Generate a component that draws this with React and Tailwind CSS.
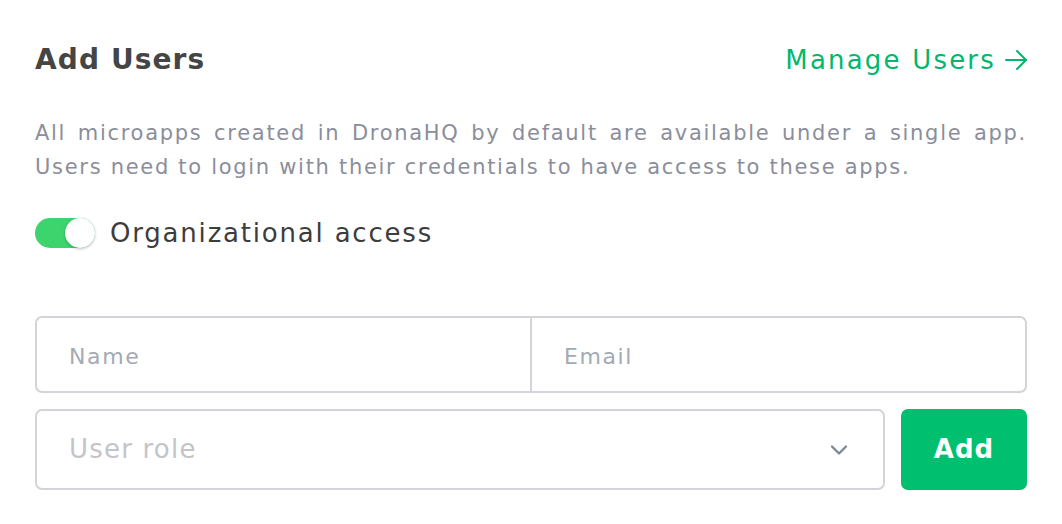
import React, { useState } from 'react';
import { ChevronDown } from 'lucide-react';

const FONT = { fontFamily: '"DejaVu Sans", "Noto Sans", sans-serif' };

const App = () => {
  const [orgAccess, setOrgAccess] = useState(true);

  return (
    <div className="w-[1062px] h-[524px] bg-white px-[35px] pt-[40px]" style={FONT}>
      <div className="flex items-center justify-between h-[40px]">
        <h1 className="text-[28px] font-bold text-[#454545] tracking-[1.1px]">Add Users</h1>
        <a href="#" className="flex items-center gap-[8px] text-[26px] text-[#00b86b] tracking-[2.2px] mr-[-1px]">
          <span>Manage Users</span>
          <svg width="24" height="24" viewBox="0 0 24 24" fill="none" stroke="currentColor" strokeWidth="2" strokeLinecap="round" strokeLinejoin="round">
            <path d="M2 12h20" />
            <path d="M13 3l9 9-9 9" />
          </svg>
        </a>
      </div>

      <div className="mt-[36px] text-[21px] leading-[34px] text-[#8b8e9a] tracking-[1.7px]">
        <p className="text-justify [text-align-last:justify]">All microapps created in DronaHQ by default are available under a single app.</p>
        <p>Users need to login with their credentials to have access to these apps.</p>
      </div>

      <div className="mt-[32px] flex items-center gap-[15px] h-[34px]">
        <button
          onClick={() => setOrgAccess(!orgAccess)}
          className={`relative w-[60px] h-[30px] rounded-full transition-colors ${orgAccess ? 'bg-[#3dd46d]' : 'bg-gray-300'}`}
        >
          <span
            className={`absolute top-0 w-[30px] h-[30px] rounded-full bg-white shadow-[0_1px_3px_rgba(0,0,0,0.25)] ${orgAccess ? 'right-0' : 'left-0'}`}
          />
        </button>
        <span className="text-[26px] text-[#3d3d3d] tracking-[1.8px]">Organizational access</span>
      </div>

      <div className="mt-[66px] flex h-[77px] border-2 border-[#d3d3da] rounded-[7px]">
        <input
          type="text"
          placeholder="Name"
          className="flex-1 min-w-0 px-[32px] pt-[4px] text-[22px] tracking-[1.6px] text-gray-700 placeholder:text-[#a3aab5] outline-none bg-transparent"
          style={FONT}
        />
        <div className="w-[2px] bg-[#d3d3da]" />
        <input
          type="text"
          placeholder="Email"
          className="flex-1 min-w-0 px-[32px] pt-[4px] text-[22px] tracking-[1.6px] text-gray-700 placeholder:text-[#a3aab5] outline-none bg-transparent"
          style={FONT}
        />
      </div>

      <div className="mt-[16px] flex gap-[16px] h-[81px]">
        <div className="flex-1 flex items-center justify-between border-2 border-[#d3d3da] rounded-[7px] pl-[32px] pr-[30px]">
          <span className="text-[26px] text-[#c4c4c8] tracking-[1.2px]">User role</span>
          <ChevronDown className="w-[28px] h-[28px] text-[#7d8790]" strokeWidth={2} />
        </div>
        <button className="w-[126px] rounded-[7px] bg-[#00bf6f] text-white text-[26px] font-bold tracking-[1px]" style={FONT}>
          Add
        </button>
      </div>
    </div>
  );
};

export default App;
